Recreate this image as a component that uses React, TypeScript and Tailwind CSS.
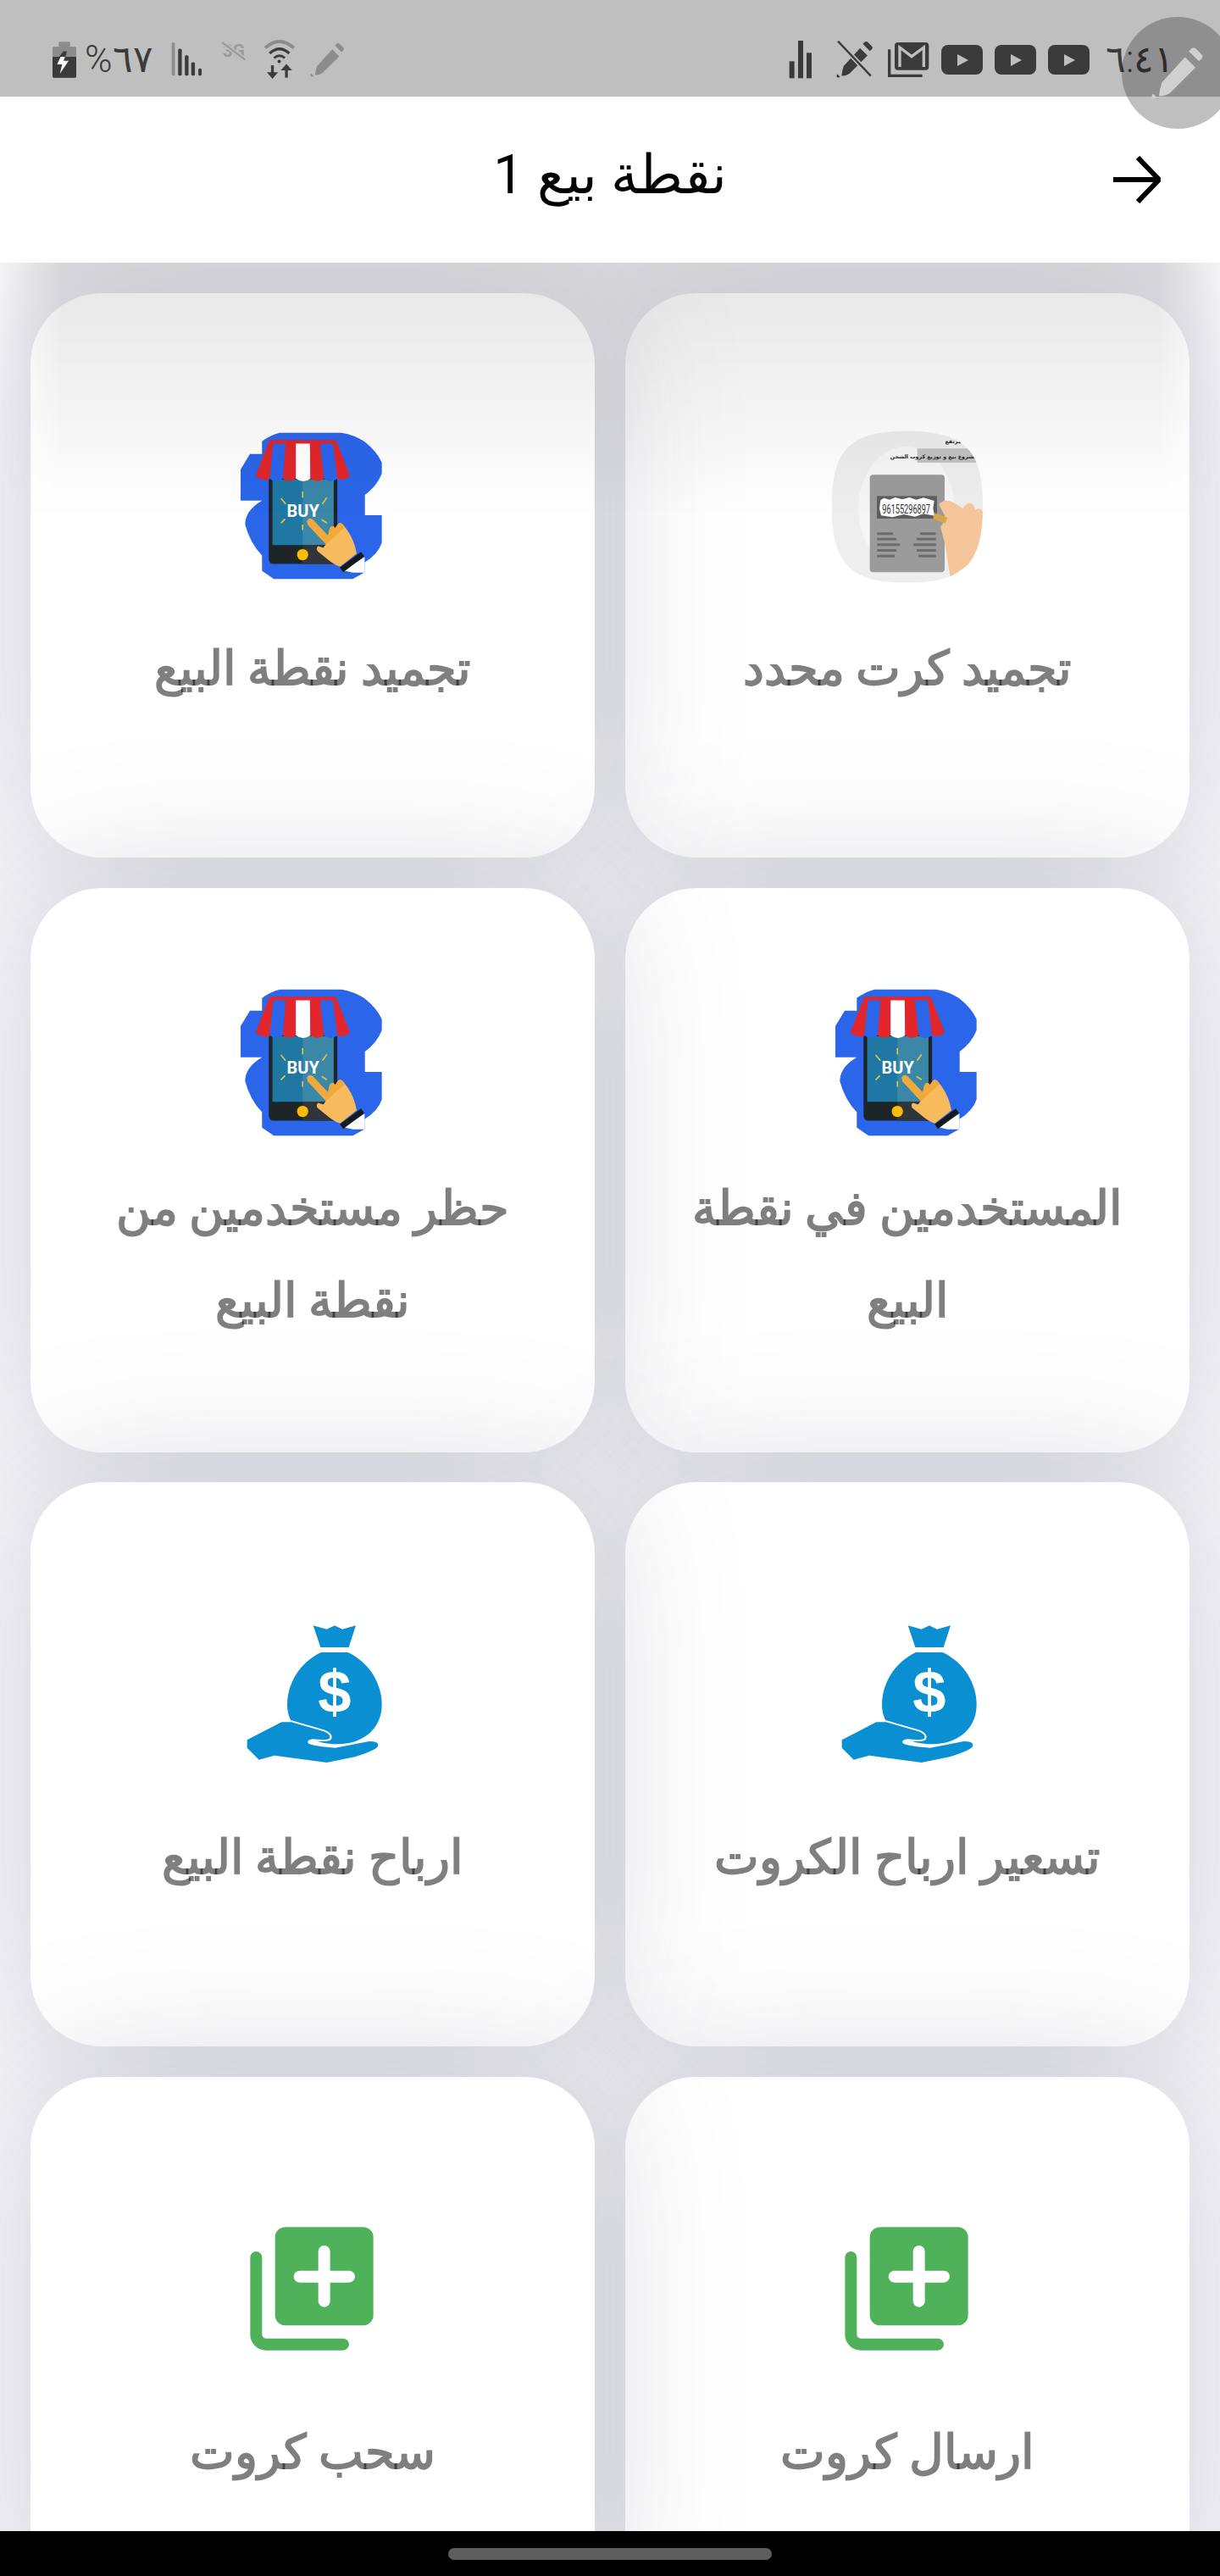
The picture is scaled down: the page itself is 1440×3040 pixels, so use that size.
const DARK = "#3b3b3b";
const MID = "#8c8c8c";

const PENCIL_BODY =
  "M80 25 L105 50 L45 110 Q30 120 18 117 Q20 100 25 85 Z M95 5 Q100 0 106 5 L120 19 Q124 24 119 29 L113 35 L89 11 Z M4 112 L13 121 Q8 125 3 123 Q-1 118 4 112 Z";

function Pencil({ fill, className }: { fill: string; className: string }) {
  return (
    <svg viewBox="0 0 125 125" className={className}>
      <path d={PENCIL_BODY} fill={fill} />
    </svg>
  );
}

function Battery() {
  return (
    <svg viewBox="66 55 84 127" className="w-[28px] h-[43px]">
      <rect x="88" y="55" width="40" height="20" fill={MID} />
      <rect x="66" y="72" width="84" height="110" rx="5" fill={MID} />
      <path d="M66 108 H150 V177 Q150 182 145 182 H71 Q66 182 66 177 Z" fill={DARK} />
      <path d="M104 88 L82 135 H100 L92 168 L123 122 H105 L118 88 Z" fill="#fff" />
      <path d="M104 88 L90 108 H112 L118 88 Z" fill={DARK} />
    </svg>
  );
}

function SignalLeft() {
  return (
    <svg viewBox="485 60 112 125" className="w-[37px] h-[42px]">
      <rect x="487" y="63" width="11" height="118" rx="4" fill={MID} />
      <rect x="510" y="85" width="13" height="96" rx="5" fill={DARK} />
      <rect x="534" y="108" width="13" height="73" rx="5" fill={DARK} />
      <rect x="557" y="133" width="13" height="48" rx="5" fill={DARK} />
      <rect x="582" y="155" width="12" height="26" rx="5" fill={DARK} />
    </svg>
  );
}

function ThreeG() {
  return (
    <svg viewBox="655 52 95 72" className="w-[32px] h-[24px]">
      <text x="660" y="108" fontSize="62" fontWeight="700" fill="#9a9a9a" fontFamily="Roboto, sans-serif">
        3G
      </text>
      <path d="M658 58 L740 120" stroke="#bfbfbf" strokeWidth="16" />
      <path d="M658 58 L740 120" stroke="#9a9a9a" strokeWidth="7" />
    </svg>
  );
}

function Wifi() {
  return (
    <svg viewBox="808 46 115 145" className="w-[38px] h-[48px]" fill="none">
      <path d="M814 78 Q865 32 916 78" stroke={MID} strokeWidth="12" />
      <path d="M830 97 Q865 66 900 97" stroke={DARK} strokeWidth="10" />
      <path d="M846 114 Q865 97 884 114" stroke={DARK} strokeWidth="9" />
      <circle cx="864" cy="126" r="6" fill={DARK} />
      <path d="M840 140 V178" stroke={DARK} strokeWidth="10" />
      <path d="M820 165 L840 188 L860 165 Z" fill={DARK} />
      <path d="M890 146 V184" stroke={DARK} strokeWidth="10" />
      <path d="M870 158 L890 135 L910 158 Z" fill={DARK} />
    </svg>
  );
}

function Bars() {
  return (
    <svg viewBox="60 50 90 142" className="w-[30px] h-[48px]" fill={DARK}>
      <rect x="65" y="128" width="18" height="60" />
      <rect x="96" y="55" width="18" height="133" />
      <rect x="126" y="98" width="18" height="90" />
    </svg>
  );
}

function MutedPencil() {
  return (
    <svg viewBox="0 0 125 125" className="w-[44px] h-[44px]">
      <path d={PENCIL_BODY} fill={DARK} />
      <path d="M6 2 L116 118" stroke="#bfbfbf" strokeWidth="16" />
      <path d="M6 2 L116 118" stroke={DARK} strokeWidth="7" />
    </svg>
  );
}

function MailStack() {
  return (
    <svg viewBox="405 55 150 130" className="w-[50px] h-[44px]" fill="none">
      <path d="M413 85 V178 H530" stroke={DARK} strokeWidth="10" />
      <rect x="432" y="60" width="121" height="98" rx="12" fill={DARK} />
      <path d="M450 147 V78 L492 110 L535 78 V147" stroke="#bfbfbf" strokeWidth="10" />
    </svg>
  );
}

function PlayBadge() {
  return (
    <svg viewBox="0 0 49 35" className="w-[49px] h-[35px]">
      <rect width="49" height="35" rx="8" fill={DARK} />
      <path d="M19 11 L32 18 L19 25 Z" fill="#bfbfbf" />
    </svg>
  );
}

function BuyIcon() {
  return (
    <svg viewBox="102 58 502 522" className="w-[167px] h-[174px] shrink-0 mr-[3px]">
      <path
        d="M178 90 Q205 70 240 60 H460 Q505 68 540 90 Q585 125 603 165 V205 Q585 250 543 280 V352 H603 V450 Q590 490 542 520 V555 L500 578 H220 L178 550 V495 Q135 450 118 385 Q118 335 178 300 H102 V190 L135 135 H178 Z"
        fill="#2b66ea"
      />
      <rect x="202" y="215" width="243" height="310" rx="16" fill="#1e2528" />
      <rect x="215" y="225" width="217" height="233" fill="#1f78a4" />
      <rect x="322" y="225" width="110" height="233" fill="#3a87a8" />
      <rect x="322" y="458" width="123" height="67" fill="#2f3538" />
      <circle cx="322" cy="492" r="20" fill="#fbbc05" />
      <path d="M205 85 H440 V100 H205 Z" fill="#e2262b" />
      <path d="M205 85 L218 98 L205 225 Q180 232 155 212 Z" fill="#e2262b" />
      <path d="M218 98 H262 L252 222 Q228 242 205 222 Z" fill="#2b66ea" />
      <path d="M262 98 H298 V222 Q275 240 252 222 Z" fill="#e2262b" />
      <path d="M298 98 H348 L350 222 Q324 242 298 222 Z" fill="#ffffff" />
      <path d="M348 98 H384 L398 222 Q374 240 350 222 Z" fill="#e2262b" />
      <path d="M384 98 H430 L445 222 Q421 242 398 222 Z" fill="#2b66ea" />
      <path d="M430 98 L440 85 L490 212 Q468 232 445 222 Z" fill="#e2262b" />
      <text x="266" y="358" fontSize="60" fontWeight="700" fill="#fff" fontFamily="Roboto, sans-serif">
        BUY
      </text>
      <g stroke="#e5c343" strokeWidth="5">
        <path d="M322 268 V290 M245 292 L262 312 M408 290 L392 312 M245 380 L260 365 M408 380 L390 368 M322 385 V405" />
      </g>
      <path
        d="M338 372 Q345 358 358 368 L412 425 L418 398 Q428 385 438 398 L446 385 Q455 375 465 385 L480 405 Q505 440 514 488 L455 535 Q430 525 415 512 L375 480 Q368 468 378 462 L395 468 L405 455 L340 385 Z"
        fill="#f7ba5c"
      />
      <path d="M338 372 Q345 358 358 368 L412 425 L418 398 Q428 385 438 398 L446 385 Q455 375 465 385 L472 395 L405 455 L340 385 Z" fill="#f2a93b" />
      <path d="M468 548 L542 500 V556 H500 Z" fill="#fff" />
      <path d="M460 546 L535 490" stroke="#16191b" strokeWidth="20" />
    </svg>
  );
}

function ScratchIcon() {
  return (
    <svg viewBox="33 -10 720 720" className="w-[240px] h-[240px] shrink-0">
      <defs>
        <clipPath id="scratch-clip">
          <path d="M125 350 C125 150 190 85 390 85 C595 85 660 150 660 350 C660 555 595 622 390 622 C190 622 125 555 125 350 Z" />
        </clipPath>
      </defs>
      <g clipPath="url(#scratch-clip)">
        <rect width="720" height="720" fill="#eeeeee" />
        <ellipse cx="390" cy="360" rx="170" ry="220" fill="#f6f6f6" />
        <rect x="428" y="147" width="232" height="50" fill="#c2c2c2" />
        <text x="640" y="182" direction="rtl" fontSize="19" fontWeight="700" fill="#222" fontFamily="DejaVu Sans, sans-serif">
          مشروع بيع و توزيع كروت الشحن
        </text>
        <text x="640" y="128" direction="rtl" fontSize="19" fontWeight="700" fill="#222" fontFamily="DejaVu Sans, sans-serif">
          شحن مرتفع
        </text>
        <rect x="260" y="240" width="265" height="345" rx="12" fill="#9b9b9b" />
        <rect x="285" y="315" width="213" height="80" fill="#5e5e5e" />
        <path d="M298 330 L310 322 L330 328 L350 320 L375 327 L400 320 L425 328 L450 321 L488 332 L484 360 L490 385 L450 378 L420 388 L380 380 L340 390 L300 384 L294 360 Z" fill="#fff" />
        <text x="304" y="376" fontSize="44" fill="#333" fontFamily="Roboto, sans-serif" textLength="170" lengthAdjust="spacingAndGlyphs">
          96155296897
        </text>
        <g fill="#6c6c6c">
          <rect x="286" y="444" width="56" height="9" />
          <rect x="286" y="463" width="68" height="9" />
          <rect x="286" y="483" width="80" height="9" />
          <rect x="286" y="503" width="68" height="9" />
          <rect x="286" y="523" width="62" height="9" />
          <rect x="438" y="444" width="56" height="9" />
          <rect x="426" y="463" width="68" height="9" />
          <rect x="414" y="483" width="80" height="9" />
          <rect x="426" y="503" width="68" height="9" />
          <rect x="432" y="523" width="62" height="9" />
        </g>
        <path d="M505 345 Q525 320 560 340 L590 360 Q605 330 625 345 L635 365 Q650 350 665 380 V520 L545 602 L525 480 L510 425 L530 395 Z" fill="#f6c69b" />
        <path d="M488 375 L535 392 L527 412 L484 396 Z" fill="#d9a54a" />
      </g>
    </svg>
  );
}

function MoneyIcon() {
  return (
    <svg viewBox="0 30 600 600" className="w-[200px] h-[200px] shrink-0">
      <path d="M302 85 L350 98 L378 85 L405 98 L453 85 L428 162 H328 Z" fill="#0a8fd2" />
      <path d="M330 180 H425 C500 215 545 290 545 365 C545 445 485 505 385 505 C290 505 210 450 210 365 C210 290 255 215 330 180 Z" fill="#0a8fd2" />
      <text x="378" y="392" textAnchor="middle" fontSize="212" fontWeight="700" fill="#fff" fontFamily="Liberation Sans, sans-serif">
        $
      </text>
      <path
        d="M68 490 L190 427 H225 L340 460 Q368 472 360 485 Q352 492 300 487 Q280 490 283 500 Q290 510 380 518 L500 495 Q535 495 532 510 Q530 525 450 550 L350 570 L165 545 L110 560 L68 518 Z"
        fill="#0a8fd2"
        stroke="#fff"
        strokeWidth="12"
        paintOrder="stroke"
      />
    </svg>
  );
}

function AddStackIcon() {
  return (
    <svg viewBox="0 8 600 600" className="w-[200px] h-[200px] shrink-0">
      <rect x="167" y="90" width="348" height="348" rx="36" fill="#4fb159" />
      <rect x="320" y="155" width="42" height="218" rx="21" fill="#fff" />
      <rect x="233" y="244" width="217" height="42" rx="21" fill="#fff" />
      <path d="M100 197 V470 A35 35 0 0 0 135 505 H408" fill="none" stroke="#4fb159" strokeWidth="42" strokeLinecap="round" />
    </svg>
  );
}

interface Tile {
  label: string;
  icon: React.ReactNode;
  gapClass: string;
}

const tiles: Tile[] = [
  { label: "تجميد كرت محدد", icon: <ScratchIcon />, gapClass: "gap-[52px]" },
  { label: "تجميد نقطة البيع", icon: <BuyIcon />, gapClass: "gap-[52px]" },
  { label: "المستخدمين في نقطة البيع", icon: <BuyIcon />, gapClass: "gap-[31px]" },
  { label: "حظر مستخدمين من نقطة البيع", icon: <BuyIcon />, gapClass: "gap-[31px]" },
  { label: "تسعير ارباح الكروت", icon: <MoneyIcon />, gapClass: "gap-[52px]" },
  { label: "ارباح نقطة البيع", icon: <MoneyIcon />, gapClass: "gap-[52px]" },
  { label: "ارسال كروت", icon: <AddStackIcon />, gapClass: "gap-[52px]" },
  { label: "سحب كروت", icon: <AddStackIcon />, gapClass: "gap-[52px]" },
];

function TileCard({ tile }: { tile: Tile }) {
  return (
    <div
      className={`h-[666px] rounded-[84px] bg-white shadow-[0_0_170px_rgba(90,90,120,0.25)] flex flex-col items-center justify-center px-[60px] pb-[4px] ${tile.gapClass}`}
    >
      <div dir="ltr" className="h-[173px] w-full flex items-center justify-center">{tile.icon}</div>
      <p className="text-[56px] leading-[109px] font-bold text-black/50 text-center">{tile.label}</p>
    </div>
  );
}

export default function App() {
  return (
    <div className="relative w-[1440px] h-[3040px] overflow-hidden flex flex-col bg-[#f8f8fa] font-[Roboto,sans-serif]">
      <div className="relative z-20 h-[114px] shrink-0 bg-[#bfbfbf] pt-[26px] flex items-center" dir="ltr">
        <div className="flex items-center ml-[62px]">
          <Battery />
          <span className="ml-[10px] w-[84px] text-[44px] leading-none font-light text-[#3b3b3b]">%٦٧</span>
          <div className="ml-[18px]"><SignalLeft /></div>
          <div className="ml-[22px] -mt-[20px]"><ThreeG /></div>
          <div className="ml-[18px]"><Wifi /></div>
          <Pencil fill={MID} className="ml-[17px] w-[41px] h-[41px]" />
        </div>
        <div className="flex items-center ml-auto mr-[65px]">
          <Bars />
          <div className="ml-[27px]"><MutedPencil /></div>
          <div className="ml-[16px]"><MailStack /></div>
          <div className="ml-[14px]"><PlayBadge /></div>
          <div className="ml-[14px]"><PlayBadge /></div>
          <div className="ml-[14px]"><PlayBadge /></div>
          <span className="ml-[19px] w-[70px] text-[44px] leading-none font-light text-[#3b3b3b]">٦:٤١</span>
        </div>
      </div>

      <header className="relative z-10 h-[196px] shrink-0 bg-white grid grid-cols-[1fr_auto_1fr] items-center after:absolute after:top-full after:inset-x-0 after:h-[300px] after:bg-gradient-to-b after:from-black/10 after:to-transparent after:[mask-image:linear-gradient(90deg,transparent,black_5%,black_95%,transparent)]">
        <span />
        <h1 className="text-[64px] leading-none text-black pb-[10px]" dir="rtl">نقطة بيع 1</h1>
        <svg viewBox="0 0 56 56" className="w-[56px] h-[56px] justify-self-end mr-[70px]" fill="none" stroke="#000" strokeWidth="6">
          <path d="M0 28 H52 M29 2 L54 28 L29 54" />
        </svg>
      </header>

      <main className="flex-1 overflow-hidden px-[36px] pt-[36px]">
        <div className="grid grid-cols-2 gap-x-[36px] gap-y-[35.6px]" dir="rtl">
          {tiles.map((tile) => (
            <TileCard key={tile.label} tile={tile} />
          ))}
        </div>
      </main>

      <div className="relative z-10 h-[53px] shrink-0 bg-black flex items-center justify-center">
        <div className="w-[382px] h-[14px] rounded-full bg-[#5e5e5e]" />
      </div>

      <div className="absolute z-30 left-[1324px] top-[20px] w-[132px] h-[132px] rounded-full bg-black/25 flex items-center justify-center">
        <Pencil fill="#d0d0d0" className="w-[62px] h-[62px]" />
      </div>
    </div>
  );
}
